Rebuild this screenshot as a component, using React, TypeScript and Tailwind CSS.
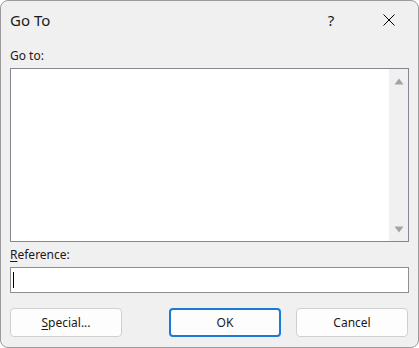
import React from "react";

export default function App() {
  const font = { fontFamily: '"Noto Sans", "DejaVu Sans", sans-serif' };
  return (
    <div className="w-[419px] h-[348px] bg-white" style={font}>
      <div className="w-full h-full border border-[#9b9b9b] rounded-[8px] bg-[#f0f0f0] flex flex-col text-[#1a1a1a] overflow-hidden">
        {/* Title bar */}
        <div className="h-[37px] flex items-center shrink-0">
          <div className="pl-[9px] text-[15px] leading-[20px] flex-1">Go To</div>
          <div className="w-[24px] flex justify-center text-[15px] leading-[20px]">?</div>
          <div className="w-[24px] ml-[34px] mr-[17px] flex justify-center">
            <svg width="12" height="12" viewBox="0 0 12 12">
              <path d="M0.5 0.5 L11.5 11.5 M11.5 0.5 L0.5 11.5" stroke="#000" strokeWidth="1" />
            </svg>
          </div>
        </div>
        {/* Content */}
        <div className="px-[9px] flex flex-col">
          <div className="mt-[10px] h-[16px] text-[12px] leading-[16px]">Go to:</div>
          <div className="mt-[4px] h-[174px] border border-[#828790] bg-white flex">
            <div className="flex-1" />
            <div className="w-[19px] bg-[#f0f0f0] flex flex-col items-center justify-between pt-[9px] pb-[8px]">
              <svg width="10" height="7" viewBox="0 0 10 7">
                <path d="M5 0.5 L9.5 6.5 L0.5 6.5 Z" fill="#a3a3a3" />
              </svg>
              <svg width="10" height="7" viewBox="0 0 10 7">
                <path d="M0.5 0.5 L9.5 0.5 L5 6.5 Z" fill="#a3a3a3" />
              </svg>
            </div>
          </div>
          <div className="mt-[5px] h-[16px] text-[12px] leading-[16px]">
            <span className="underline underline-offset-[2px]">R</span>eference:
          </div>
          <div className="mt-[4px] h-[26px] border border-[#8f8f8f] bg-white flex items-center pl-[2px]">
            <div className="w-px h-[16px] bg-black" />
          </div>
          <div className="mt-[15px] flex justify-between">
            <div className="w-[112px] h-[29px] rounded-[4px] border border-[#d0d0d0] bg-[#fdfdfd] flex items-center justify-center text-[12px]">
              <span>
                <span className="underline underline-offset-[2px]">S</span>pecial...
              </span>
            </div>
            <div className="flex gap-[15px] mr-[1px]">
              <div className="w-[112px] h-[29px] rounded-[4px] border-2 border-[#1a7ad6] bg-[#fdfdfd] flex items-center justify-center text-[12px]">
                OK
              </div>
              <div className="w-[112px] h-[29px] rounded-[4px] border border-[#d0d0d0] bg-[#fdfdfd] flex items-center justify-center text-[12px]">
                Cancel
              </div>
            </div>
          </div>
        </div>
      </div>
    </div>
  );
}
